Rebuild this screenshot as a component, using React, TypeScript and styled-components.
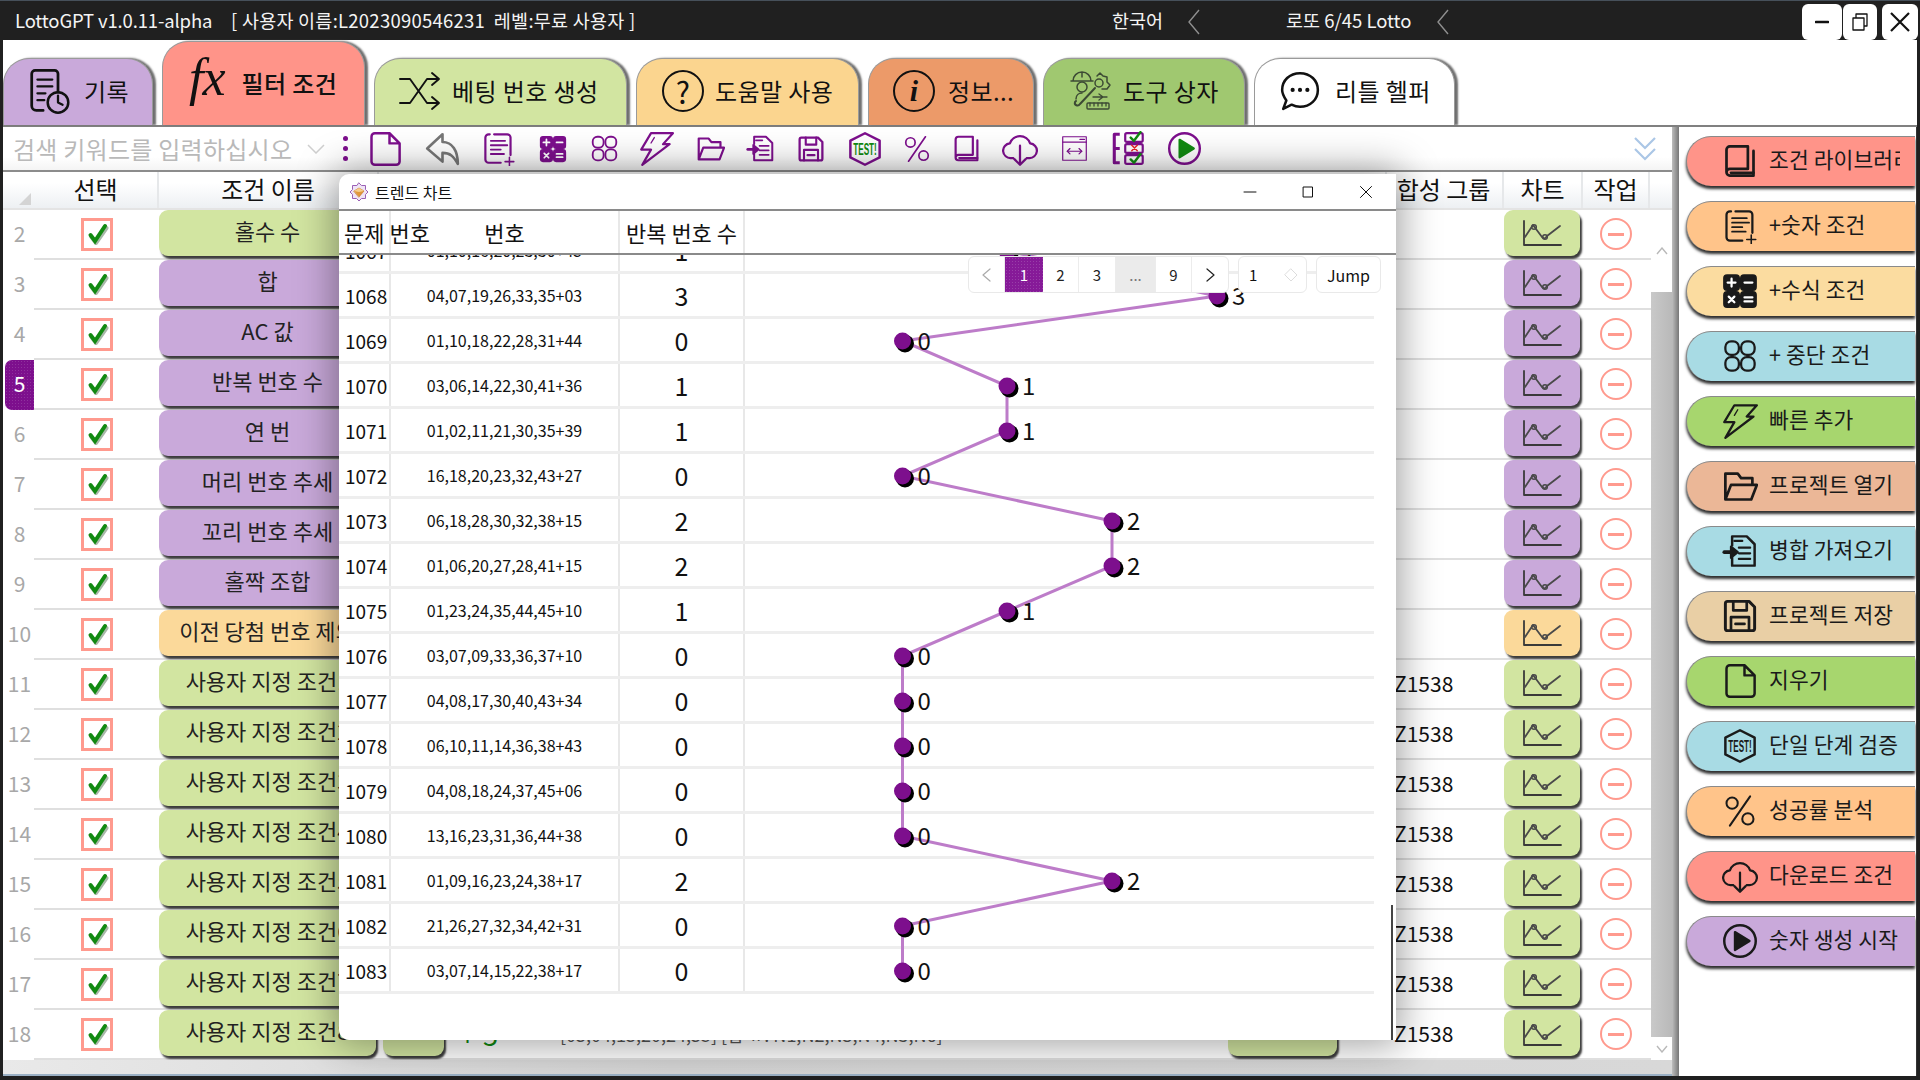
import React from "react";
import styled, { createGlobalStyle } from "styled-components";

const FONT = `"Noto Sans CJK KR", "Noto Sans", sans-serif`;
const C = {
  purple: "#c9a9da",
  green: "#d2e5a1",
  yellow: "#fbd99a",
  red: "#ff9489",
  deep: "#7d0f8d",
};

const Global = createGlobalStyle`
  html, body { margin: 0; padding: 0; background: #202020; overflow: hidden; }
  * { box-sizing: border-box; }
  body { font-family: ${FONT}; color: #111; }
`;

const Window = styled.div`
  position: relative;
  width: 1920px;
  height: 1080px;
  padding: 3px 3px 4px 3px;
  background: #202020;
  border-top: 1px solid #46505a;
  display: flex;
  flex-direction: column;
  overflow: hidden;
`;

const TitleBar = styled.header`
  height: 36px;
  flex: none;
  display: flex;
  align-items: center;
  color: #f4f4f4;
  font-size: 18.5px;
  white-space: nowrap;
`;
const TitleText = styled.span<{ $w: number; $ml?: number; $ls?: number }>`
  width: ${(p) => p.$w}px;
  margin-left: ${(p) => p.$ml ?? 0}px;
  letter-spacing: ${(p) => p.$ls ?? 0}px;
  flex: none;
  margin-bottom: 4px;
`;
const ChevronLeft = styled.svg`
  width: 14px;
  height: 26px;
  flex: none;
  fill: none;
  stroke: #8f8f8f;
  stroke-width: 1.4;
`;
const WinButtons = styled.div`
  margin-left: auto;
  margin-right: -1px;
  display: flex;
  height: 36px;
`;
const WinButton = styled.button<{ $w: number; $mr: number }>`
  width: ${(p) => p.$w}px;
  height: 36px;
  border: 0;
  padding: 0;
  margin-right: ${(p) => p.$mr}px;
  background: #fff;
  border-radius: 6px;
  display: flex;
  align-items: center;
  justify-content: center;
  color: #111;
`;

const Tabs = styled.nav`
  height: 87px;
  flex: none;
  background: #fff;
  border-bottom: 2px solid #808080;
  display: flex;
  align-items: flex-end;
  gap: 9px;
`;
const Tab = styled.div<{ $w: number; $bg: string; $active?: boolean; $pl: number; $gap: number }>`
  width: ${(p) => p.$w}px;
  height: ${(p) => (p.$active ? 84 : 67)}px;
  flex: none;
  background: ${(p) => p.$bg};
  border: 1px solid #9a9a9a;
  border-bottom: 0;
  border-radius: 26px 26px 0 0;
  box-shadow: 3px 0 2px #6e6e6e;
  display: flex;
  align-items: center;
  padding: 0 0 3px ${(p) => p.$pl}px;
  gap: ${(p) => p.$gap}px;
  font-size: 24px;
  letter-spacing: 0.4px;
  white-space: nowrap;
  color: #111;
`;
const FxMark = styled.span`
  font: italic 500 52px "Liberation Serif", serif;
  letter-spacing: -1px;
  line-height: 1;
  margin-top: -8px;
`;
const ActiveLabel = styled.span`
  font-weight: 500;
`;

const Body = styled.div`
  flex: 1;
  min-height: 0;
  display: flex;
  background: #fff;
`;
const Main = styled.main`
  width: 1669px;
  flex: none;
  display: flex;
  flex-direction: column;
`;
const Divider = styled.div`
  width: 7px;
  flex: none;
  background: linear-gradient(90deg, #bdbdbd, #777);
`;

const Toolbar = styled.div`
  height: 45px;
  flex: none;
  display: flex;
  align-items: center;
  border-bottom: 2px solid #8c8c8c;
  background: linear-gradient(#fff 70%, #f4f4f4);
`;
const Search = styled.div`
  width: 330px;
  flex: none;
  height: 40px;
  padding-left: 10px;
  display: flex;
  align-items: center;
  color: #b9b9b9;
  font-size: 24px;
  letter-spacing: 0.25px;
  white-space: nowrap;
`;
const SearchText = styled.span`
  width: 281px;
  overflow: hidden;
  flex: none;
`;
const SearchCaret = styled.svg`
  width: 18px;
  height: 10px;
  margin-left: 13px;
  flex: none;
  fill: none;
  stroke: #cfcfcf;
  stroke-width: 1.5;
`;
const Dots = styled.div`
  width: 24px;
  flex: none;
  display: flex;
  flex-direction: column;
  align-items: center;
  gap: 5px;
  i {
    width: 5px;
    height: 5px;
    border-radius: 50%;
    background: ${C.deep};
  }
`;
const ToolSlot = styled.div<{ $w: number }>`
  width: ${(p) => p.$w}px;
  flex: none;
  display: flex;
  justify-content: center;
  align-items: center;
  color: ${C.deep};
`;
const ToolEnd = styled.svg`
  margin-left: auto;
  margin-right: 15px;
  width: 24px;
  height: 24px;
  fill: none;
  stroke: #aac6e6;
  stroke-width: 2.2;
`;

const HeadRow = styled.div`
  height: 38px;
  flex: none;
  display: flex;
  background: linear-gradient(#fff 30%, #edf0f3);
  font-size: 24px;
  border-bottom: 2px solid #e4e4e4;
`;
const Corner = styled.div`
  width: 31px;
  flex: none;
  position: relative;
  &::after {
    content: "";
    position: absolute;
    right: 3px;
    bottom: 3px;
    border-left: 12px solid transparent;
    border-bottom: 12px solid #d4d4d4;
  }
`;
const HeadCell = styled.div<{ $w: number; $pr?: number }>`
  width: ${(p) => p.$w}px;
  flex: none;
  display: flex;
  align-items: center;
  justify-content: center;
  padding: 0 ${(p) => p.$pr ?? 0}px 3px 0;
  border-right: 2px solid #e6e8ea;
  white-space: nowrap;
`;

const TableArea = styled.div`
  height: 850px;
  flex: none;
  display: flex;
`;
const Rows = styled.div`
  width: 1648px;
  flex: none;
  display: flex;
  flex-direction: column;
`;
const Row = styled.div`
  height: 50px;
  flex: none;
  display: flex;
`;
const RowNum = styled.div<{ $sel?: boolean }>`
  width: 29px;
  margin-left: 2px;
  flex: none;
  display: flex;
  align-items: center;
  justify-content: center;
  font-size: 21px;
  padding-bottom: 5px;
  color: ${(p) => (p.$sel ? "#fff" : "#a8a8a8")};
  border-radius: 7px 0 0 7px;
  background-color: ${(p) => (p.$sel ? C.deep : "transparent")};
  background-image: ${(p) =>
    p.$sel ? "radial-gradient(rgba(255,255,255,.14) 1px, transparent 1px)" : "none"};
  background-size: 3px 3px;
`;
const RowBody = styled.div`
  flex: 1;
  display: flex;
  align-items: flex-start;
  border-bottom: 2px solid #dfdfdf;
  height: 50px;
`;
const CheckCell = styled.div`
  width: 125px;
  height: 48px;
  flex: none;
  display: flex;
  align-items: center;
  justify-content: center;
`;
const CheckBox = styled.div`
  width: 32px;
  height: 33px;
  border: 3px solid #ff9a8e;
  background: #fff;
  display: flex;
  align-items: center;
  justify-content: center;
`;
const RowButton = styled.div<{ $w: number; $bg: string; $mr?: number }>`
  width: ${(p) => p.$w}px;
  height: 46px;
  flex: none;
  margin-right: ${(p) => p.$mr ?? 0}px;
  background: ${(p) => p.$bg};
  border-radius: 9px;
  box-shadow: 2px 3px 2px #3c3c3c;
  display: flex;
  align-items: center;
  justify-content: center;
  font-size: 22px;
  padding-bottom: 6px;
  white-space: nowrap;
  overflow: hidden;
  color: #222;
`;
const ChartHolder = styled.span`
  display: flex;
  margin-top: 6px;
`;
const PlusCell = styled.div`
  width: 116px;
  height: 48px;
  flex: none;
  padding-left: 16px;
  display: flex;
  align-items: center;
  color: #118a11;
  font-size: 27px;
  word-spacing: 2px;
`;
const MidText = styled.div`
  width: 668px;
  height: 48px;
  flex: none;
  display: flex;
  align-items: center;
  font-size: 18px;
  color: #555;
  white-space: nowrap;
`;
const GroupCell = styled.div`
  width: 167px;
  height: 48px;
  flex: none;
  padding: 0 0 3px 57px;
  display: flex;
  align-items: center;
  font-size: 21px;
`;
const RemoveCell = styled.div`
  flex: 1;
  height: 48px;
  display: flex;
  align-items: center;
  justify-content: center;
`;
const RemoveIcon = styled.div`
  width: 32px;
  height: 32px;
  border: 2px solid #ff9a8e;
  border-radius: 50%;
  display: flex;
  align-items: center;
  justify-content: center;
  &::after {
    content: "";
    width: 16px;
    height: 3px;
    background: #ff9a8e;
  }
`;
const VScroll = styled.div`
  width: 21px;
  flex: none;
  display: flex;
  flex-direction: column;
  align-items: center;
  background: #f7f7f7;
`;
const VSpace = styled.div<{ $h: number }>`
  height: ${(p) => p.$h}px;
  width: 100%;
  flex: none;
  background: #fff;
  display: flex;
  align-items: center;
  justify-content: center;
`;
const VThumb = styled.div`
  flex: 1;
  width: 100%;
  background: linear-gradient(90deg, #c9c9c9, #b9b9b9);
`;
const ArrowMark = styled.svg`
  width: 12px;
  height: 8px;
  fill: none;
  stroke: #b9b9b9;
  stroke-width: 1.4;
`;
const HScroll = styled.div`
  height: 16px;
  flex: none;
  background: linear-gradient(90deg, #e9e9e9, #d4d4d4 40%, #d8d8d8);
  border-bottom: 2px solid #9bb0c4;
`;

const Sidebar = styled.aside`
  flex: 1;
  padding: 9px 1px 0 7px;
  display: flex;
  flex-direction: column;
  gap: 15px;
  border-right: 1px solid #333;
`;
const SideButton = styled.div<{ $bg: string }>`
  height: 50px;
  flex: none;
  background: ${(p) => p.$bg};
  border: 1px solid #8a8a8a;
  border-right: 0;
  border-bottom: 0;
  border-radius: 25px 0 0 25px;
  box-shadow: 0 3px 3px #2e2e2e;
  display: flex;
  align-items: center;
  padding: 0 0 2px 35px;
  gap: 11px;
  font-size: 21.5px;
  letter-spacing: 0.1px;
  white-space: nowrap;
  color: #1a1a1a;
`;
const SideLabel = styled.span`
  max-width: 131px;
  overflow: hidden;
  margin-bottom: 4px;
`;

const Modal = styled.section`
  position: absolute;
  left: 339px;
  top: 173px;
  width: 1057px;
  height: 866px;
  background: #fff;
  border-radius: 10px 0 0 10px;
  box-shadow: 0 0 38px 5px rgba(0, 0, 0, 0.37);
  display: flex;
  flex-direction: column;
  overflow: hidden;
`;
const ModalTitle = styled.div`
  height: 37px;
  flex: none;
  display: flex;
  align-items: center;
  padding-left: 10px;
  gap: 6px;
  border-bottom: 2px solid #8a8a8a;
  font-size: 16px;
`;
const ModalControls = styled.div`
  margin-left: auto;
  display: flex;
  align-items: center;
  gap: 44px;
  margin-right: 23px;
`;
const ModalHead = styled.div`
  height: 44px;
  flex: none;
  display: grid;
  grid-template-columns: 52px 229px 125px 1fr;
  border-bottom: 2px solid #8a8a8a;
  font-size: 22px;
`;
const ModalHeadCell = styled.div<{ $left?: boolean }>`
  display: flex;
  align-items: center;
  justify-content: ${(p) => (p.$left ? "flex-start" : "center")};
  padding-left: ${(p) => (p.$left ? 5 : 0)}px;
  border-right: 2px solid #e8e8e8;
  white-space: nowrap;
`;
const ModalBody = styled.div`
  position: relative;
  flex: 1;
  overflow: hidden;
`;
const DataList = styled.div`
  margin-top: -26px;
  width: 1035px;
`;
const DataRow = styled.div`
  height: 45px;
  display: grid;
  grid-template-columns: 52px 229px 125px 1fr;
  border-bottom: 3px solid #eeeeee;
`;
const DataCell = styled.div<{ $size: number; $left?: boolean }>`
  display: flex;
  align-items: center;
  justify-content: ${(p) => (p.$left ? "flex-start" : "center")};
  padding-left: ${(p) => (p.$left ? 6 : 0)}px;
  border-right: 2px solid #e8e8e8;
  font-size: ${(p) => p.$size}px;
  white-space: nowrap;
`;
const ChartSvg = styled.svg`
  position: absolute;
  left: 406px;
  top: 0;
  width: 651px;
  height: 785px;
  font-family: ${FONT};
`;
const InnerThumb = styled.div`
  position: absolute;
  right: 3px;
  bottom: 0;
  width: 2px;
  height: 135px;
  background: #444;
`;
const Pager = styled.div`
  position: absolute;
  left: 629px;
  top: 1px;
  display: flex;
  gap: 9px;
  height: 37px;
  font-size: 15px;
`;
const PagerGroup = styled.div`
  display: flex;
  background: #fff;
  border: 1px solid #e9e9e9;
  border-radius: 6px;
`;
const PageCell = styled.div<{ $w: number; $state?: "active" | "more" }>`
  width: ${(p) => p.$w}px;
  display: flex;
  align-items: center;
  justify-content: center;
  border-right: ${(p) => (p.$state === "active" ? "0" : "1px solid #ececec")};
  color: ${(p) => (p.$state === "active" ? "#fff" : p.$state === "more" ? "#777" : "#222")};
  background-color: ${(p) =>
    p.$state === "active" ? "#861a98" : p.$state === "more" ? "#ebebeb" : "transparent"};
  background-image: ${(p) =>
    p.$state === "active" ? "radial-gradient(rgba(255,255,255,.16) 1px, transparent 1px)" : "none"};
  background-size: 3px 3px;
  &:last-child {
    border-right: 0;
  }
`;
const PagerInput = styled(PagerGroup)`
  width: 69px;
  align-items: center;
  justify-content: space-between;
  padding: 0 8px 0 10px;
`;
const PagerJump = styled(PagerGroup)`
  width: 65px;
  align-items: center;
  justify-content: center;
  font-size: 16px;
`;
const Glyph = styled.svg<{ $s: number; $h?: number; $tone?: string }>`
  width: ${(p) => p.$s}px;
  height: ${(p) => p.$h ?? p.$s}px;
  flex: none;
  fill: none;
  color: ${(p) => p.$tone ?? "inherit"};
  stroke: currentColor;
  stroke-width: 2;
  stroke-linejoin: round;
  stroke-linecap: round;
`;

type IconName =
  | "book" | "numdoc" | "calc" | "grid" | "bolt" | "folder" | "import" | "save"
  | "doc" | "test" | "percent" | "cloud" | "play" | "back" | "window" | "checks";

const Icon: React.FC<{ name: IconName; s: number; accent?: string }> = ({ name, s, accent = "currentColor" }) => {
  const g = (children: React.ReactNode) => (
    <Glyph $s={s} viewBox="0 0 32 32">{children}</Glyph>
  );
  switch (name) {
    case "book":
      return g(<>
        <path d="M4 26V6a3 3 0 0 1 3-3h16v20H7a3 3 0 0 0-3 3 3 3 0 0 0 3 3h21V7" strokeWidth={2.4} />
        <path d="M8 26.500h20" strokeWidth={2.4} />
      </>);
    case "numdoc":
      return g(<>
        <path d="M12 3h12a3 3 0 0 1 3 3v16M18 29H7a3 3 0 0 1-3-3V6a3 3 0 0 1 3-3h1" />
        <path d="M9 9h13M9 13h15M9 17h9M9 21h12" strokeWidth={1.7} />
        <path d="M26 24v8M22 28h8" strokeWidth={1.4} />
      </>);
    case "calc":
      return g(<>
        <rect x="2" y="2" width="13" height="13" rx="2.500" fill="currentColor" />
        <rect x="17" y="2" width="13" height="13" rx="2.500" fill="currentColor" />
        <rect x="2" y="17" width="13" height="13" rx="2.500" fill="currentColor" />
        <rect x="17" y="17" width="13" height="13" rx="2.500" fill="currentColor" />
        <path d="M5 8.500h7M8.500 5v7M20 8.500h7M6 21l5 5M11 21l-5 5M20 21.700h7M20 25.300h7" stroke="#fff" strokeWidth={2} />
      </>);
    case "grid":
      return g(<>
        <rect x="3" y="3" width="12" height="12" rx="5" />
        <rect x="17" y="3" width="12" height="12" rx="5" />
        <rect x="3" y="17" width="12" height="12" rx="5" />
        <rect x="17" y="17" width="12" height="12" rx="5" />
      </>);
    case "bolt":
      return g(<>
        <path d="M11 2h20l-9 10h6L3 31l8-14H2z" />
        <path d="M14 6l-3 5" strokeWidth={1.2} />
      </>);
    case "folder":
      return g(<path d="M3 28V5h11l3 4h10v6M3 28l5-13h23l-5 13z" strokeWidth={2.4} />);
    case "import":
      return g(<>
        <path d="M9 11V3h13l7 7v19H9v-7" strokeWidth={2.2} />
        <path d="M15 13h10M15 18h10M15 23h10M11 7h7" strokeWidth={2} />
        <path d="M2 17h10" strokeWidth={3.2} />
        <path d="M8 12l6 5-6 5z" fill="currentColor" />
      </>);
    case "save":
      return g(<>
        <path d="M5 3h19l5 5v19a2 2 0 0 1-2 2H5a2 2 0 0 1-2-2V5a2 2 0 0 1 2-2z" strokeWidth={2.6} />
        <path d="M10 3v8h12V3M8 29V17h16v12M12 23h8" strokeWidth={2.4} />
      </>);
    case "doc":
      return g(<path d="M7 2h13l9 9v16a3 3 0 0 1-3 3H7a3 3 0 0 1-3-3V5a3 3 0 0 1 3-3zM20 2v9h9" strokeWidth={2.2} />);
    case "test":
      return g(<>
        <path d="M16 2l13 6.500v15L16 30 3 23.500v-15z" strokeWidth={2.2} />
        <text x="16" y="21" textAnchor="middle" fontSize="14" fontWeight="700" stroke="none" fill={accent} fontFamily={`"Liberation Sans", sans-serif`} textLength="21" lengthAdjust="spacingAndGlyphs">TEST!</text>
      </>);
    case "percent":
      return g(<>
        <circle cx="9" cy="9" r="5" strokeWidth={1.8} />
        <circle cx="23" cy="23" r="5" strokeWidth={1.8} />
        <path d="M25 3L7 29" strokeWidth={1.8} />
      </>);
    case "cloud":
      return g(<>
        <path d="M10 24H8a6.500 6.500 0 0 1-1-13 9.500 9.500 0 0 1 18 0 6.500 6.500 0 0 1-1 13h-2" />
        <path d="M16 13v17M11 25l5 5 5-5" />
      </>);
    case "play":
      return g(<>
        <circle cx="16" cy="16" r="14" strokeWidth={2.2} />
        <path d="M11.500 8l13 8-13 8z" fill={accent} stroke={accent} />
      </>);
    case "back":
      return g(<path d="M16 3L2 16l14 12v-8c7 0 10 3 14 10 0-12-5-20-14-20z" stroke="#777" strokeWidth={2.4} />);
    case "window":
      return g(<>
        <rect x="3" y="3" width="26" height="26" strokeWidth={1.3} />
        <path d="M3 9h26M22 6h5M8 19h16" strokeWidth={1.3} />
        <path d="M11 16l-3 3 3 3M21 16l3 3-3 3" strokeWidth={1.3} />
      </>);
    case "checks":
      return g(<>
        <path d="M8 3H3v26h5M3 16h5" strokeWidth={2.8} strokeLinecap="butt" />
        <rect x="13" y="2" width="16" height="8" rx="1.500" />
        <rect x="13" y="12" width="16" height="8" rx="1.500" />
        <rect x="13" y="22" width="16" height="8" rx="1.500" />
        <path d="M18 6l3 3 6-8M18 26l3 3 6-8" stroke="#118a11" strokeWidth={2.2} />
        <path d="M19 13l5 5M24 13l-5 5" stroke="#e8262a" strokeWidth={1.4} />
      </>);
  }
};

const CheckMark = () => (
  <Glyph $s={24} viewBox="0 0 24 24">
    <path d="M5.500 14l4.500 6L20.500 5" stroke="#a8b8a8" strokeWidth={4} transform="translate(1 1)" />
    <path d="M5.500 13l4.500 6L20 4" stroke="#118a11" strokeWidth={4} strokeLinejoin="miter" />
  </Glyph>
);

const ChartIcon = () => (
  <Glyph $s={40} $h={28} viewBox="0 0 40 28">
    <path d="M2 2v24h37" stroke="#3a3a3a" strokeWidth={1.8} />
    <path d="M3 18L11 6l9 12c2 2 3 2 5-1L38 7" stroke="#4a4a4a" strokeWidth={1.8} />
    <circle cx="12" cy="8" r="2.300" stroke="#4a4a4a" strokeWidth={1.5} />
    <circle cx="23" cy="18" r="2.300" stroke="#4a4a4a" strokeWidth={1.5} />
  </Glyph>
);

const TitleChevron = () => (
  <ChevronLeft viewBox="0 0 14 26"><path d="M12 1L2 13l10 12" /></ChevronLeft>
);

const BoardIcon = () => (
  <Glyph $s={48} viewBox="0 0 42 42">
    <path d="M9 3h16a3 3 0 0 1 3 3v16M15 38H9a4 4 0 0 1-4-4V6a3 3 0 0 1 3-3" strokeWidth={2.4} />
    <path d="M10 11h13M10 17h13M10 23h7M10 29h6" strokeWidth={2} />
    <circle cx="28" cy="31" r="9" strokeWidth={2.2} />
    <path d="M28 25v6l4 2" strokeWidth={2} />
  </Glyph>
);
const ShuffleIcon = () => (
  <Glyph $s={42} viewBox="0 0 42 42">
    <path d="M1 9h10l17 24h11M1 33h10l17-24h11" strokeWidth={1.9} />
    <path d="M33 3l7 6-7 6M33 27l7 6-7 6" strokeWidth={1.9} />
  </Glyph>
);
const CircleGlyph = styled.div<{ $serif?: boolean }>`
  width: 42px;
  height: 42px;
  flex: none;
  border: 2.4px solid #111;
  border-radius: 50%;
  display: flex;
  align-items: center;
  justify-content: center;
  font: ${(p) => (p.$serif ? `italic 700 30px "Liberation Serif", serif` : `400 30px ${FONT}`)};
`;
const ToolsIcon = () => (
  <Glyph $s={42} $tone="#3c4a34" viewBox="0 0 42 42">
    <path d="M4 11a9 9 0 0 1 18 0zM2 11h22M13 2v5" strokeWidth={1.5} />
    <circle cx="13" cy="17" r="5" strokeWidth={1.5} />
    <path d="M7 29c0-4 3-6 6-6" strokeWidth={1.5} />
    <path d="M28 6l3-3 3 3 4 1v5l3 3-3 4h-5" strokeWidth={1.5} />
    <circle cx="30" cy="13" r="4" strokeWidth={1.5} />
    <path d="M26 18L11 34c-2 3-6 1-5-2l1-1" strokeWidth={2} />
    <rect x="18" y="33" width="22" height="6" rx="1" strokeWidth={1.4} />
    <path d="M21 33v3M25 33v3M29 33v3M33 33v3M37 33v3M24 27h14M30 24l4 3-4 3" strokeWidth={1.3} />
  </Glyph>
);
const ChatIcon = () => (
  <Glyph $s={42} viewBox="0 0 40 40">
    <path d="M20 3c10 0 17 7 17 16s-7 16-17 16c-3 0-6-1-8-2l-8 4 3-8c-2-3-4-6-4-10C3 10 10 3 20 3z" strokeWidth={2.4} />
    <circle cx="13" cy="19" r="1" fill="currentColor" />
    <circle cx="20" cy="19" r="1" fill="currentColor" />
    <circle cx="27" cy="19" r="1" fill="currentColor" />
  </Glyph>
);
const GemIcon = () => (
  <Glyph $s={20} viewBox="0 0 20 20">
    <path d="M10 1l2.500 2.500H16.500V7.500L19 10l-2.500 2.500v4H12.500L10 19l-2.500-2.500h-4v-4L1 10l2.500-2.500v-4h4z" fill="#efe4f5" stroke="#9a5fb5" strokeWidth={1} />
    <path d="M5 9l5-3 5 3-5 6z" fill="#e0973a" stroke="#c06f1e" strokeWidth={0.6} />
    <path d="M5 9l5 1 5-1-5-3z" fill="#f6cd8a" stroke="none" />
  </Glyph>
);

const tools: { n: IconName; w: number; s: number; accent?: string }[] = [
  { n: "doc", w: 56, s: 36 },
  { n: "back", w: 58, s: 35 },
  { n: "numdoc", w: 54, s: 35 },
  { n: "calc", w: 56, s: 28 },
  { n: "grid", w: 46, s: 29 },
  { n: "bolt", w: 58, s: 35 },
  { n: "folder", w: 50, s: 29 },
  { n: "import", w: 50, s: 29 },
  { n: "save", w: 52, s: 28 },
  { n: "test", w: 56, s: 36, accent: "#118a11" },
  { n: "percent", w: 48, s: 30 },
  { n: "book", w: 50, s: 29 },
  { n: "cloud", w: 58, s: 36 },
  { n: "window", w: 50, s: 29 },
  { n: "checks", w: 58, s: 35 },
  { n: "play", w: 54, s: 35, accent: "#118a11" },
];

const side: { n: IconName; t: string; bg: string }[] = [
  { n: "book", t: "조건 라이브러리", bg: "#ff9489" },
  { n: "numdoc", t: "+숫자 조건", bg: "#ffc48a" },
  { n: "calc", t: "+수식 조건", bg: "#fbdca0" },
  { n: "grid", t: "+ 중단 조건", bg: "#a8dbe4" },
  { n: "bolt", t: "빠른 추가", bg: "#a7d66e" },
  { n: "folder", t: "프로젝트 열기", bg: "#ebb797" },
  { n: "import", t: "병합 가져오기", bg: "#a8dbe4" },
  { n: "save", t: "프로젝트 저장", bg: "#e9cfa5" },
  { n: "doc", t: "지우기", bg: "#a7d66e" },
  { n: "test", t: "단일 단계 검증", bg: "#a8dbe4" },
  { n: "percent", t: "성공률 분석", bg: "#ffc48a" },
  { n: "cloud", t: "다운로드 조건", bg: "#ff9489" },
  { n: "play", t: "숫자 생성 시작", bg: "#c9a9da" },
];

const names: [string, string][] = [
  ["홀수 수", C.green],
  ["합", C.purple],
  ["AC 값", C.purple],
  ["반복 번호 수", C.purple],
  ["연 번", C.purple],
  ["머리 번호 추세", C.purple],
  ["꼬리 번호 추세", C.purple],
  ["홀짝 조합", C.purple],
  ["이전 당첨 번호 제외", C.yellow],
  ...Array.from({ length: 8 }, (_, i): [string, string] => [`사용자 지정 조건${i + 1}`, C.green]),
];

const draws: [number, string, number][] = [
  [1067, "01,10,16,20,23,30+45", 1],
  [1068, "04,07,19,26,33,35+03", 3],
  [1069, "01,10,18,22,28,31+44", 0],
  [1070, "03,06,14,22,30,41+36", 1],
  [1071, "01,02,11,21,30,35+39", 1],
  [1072, "16,18,20,23,32,43+27", 0],
  [1073, "06,18,28,30,32,38+15", 2],
  [1074, "01,06,20,27,28,41+15", 2],
  [1075, "01,23,24,35,44,45+10", 1],
  [1076, "03,07,09,33,36,37+10", 0],
  [1077, "04,08,17,30,40,43+34", 0],
  [1078, "06,10,11,14,36,38+43", 0],
  [1079, "04,08,18,24,37,45+06", 0],
  [1080, "13,16,23,31,36,44+38", 0],
  [1081, "01,09,16,23,24,38+17", 2],
  [1082, "21,26,27,32,34,42+31", 0],
  [1083, "03,07,14,15,22,38+17", 0],
];
const px = (v: number) => [157.5, 262, 367, 472][v];
const py = (i: number) => -4 + 45 * i;
const linePoints = draws.map((d, i) => `${px(d[2])},${py(i)}`).join(" ");

export default function App() {
  return (
    <Window>
      <Global />
      <TitleBar>
        <TitleText $w={216} $ml={12} $ls={-0.15}>LottoGPT v1.0.11-alpha</TitleText>
        <TitleText $w={878} $ls={0.25}>[ 사용자 이름:L2023090546231&nbsp; 레벨:무료 사용자 ]</TitleText>
        <TitleText $w={75} $ml={3}>한국어</TitleText>
        <TitleChevron />
        <TitleText $w={150} $ml={85}>로또 6/45 Lotto</TitleText>
        <TitleChevron />
        <WinButtons>
          <WinButton $w={40} $mr={1}>
            <Glyph $s={14} viewBox="0 0 14 14"><path d="M1 7h12" strokeWidth={2.6} /></Glyph>
          </WinButton>
          <WinButton $w={34} $mr={5}>
            <Glyph $s={20} viewBox="0 0 20 20"><path d="M3 6h11v12H3zM6 6V2h11v12h-3" strokeWidth={1.3} /></Glyph>
          </WinButton>
          <WinButton $w={36} $mr={0}>
            <Glyph $s={22} viewBox="0 0 22 22"><path d="M2 2l18 18M20 2L2 20" strokeWidth={2.2} strokeLinecap="butt" /></Glyph>
          </WinButton>
        </WinButtons>
      </TitleBar>

      <Tabs>
        <Tab $w={150} $bg={C.purple} $pl={22} $gap={10}><BoardIcon />기록</Tab>
        <Tab $w={203} $bg={C.red} $active $pl={26} $gap={17}><FxMark>fx</FxMark><ActiveLabel>필터 조건</ActiveLabel></Tab>
        <Tab $w={253} $bg={C.green} $pl={24} $gap={11}><ShuffleIcon />베팅 번호 생성</Tab>
        <Tab $w={223} $bg="#fbd58f" $pl={25} $gap={11}><CircleGlyph>?</CircleGlyph>도움말 사용</Tab>
        <Tab $w={166} $bg="#ec9a69" $pl={24} $gap={13}><CircleGlyph $serif>i</CircleGlyph>정보...</Tab>
        <Tab $w={202} $bg="#a0c870" $pl={25} $gap={12}><ToolsIcon />도구 상자</Tab>
        <Tab $w={201} $bg="#fff" $pl={24} $gap={14}><ChatIcon />리틀 헬퍼</Tab>
      </Tabs>

      <Body>
        <Main>
          <Toolbar>
            <Search>
              <SearchText>검색 키워드를 입력하십시오</SearchText>
              <SearchCaret viewBox="0 0 18 10"><path d="M1 1l8 8 8-8" /></SearchCaret>
            </Search>
            <Dots><i /><i /><i /></Dots>
            {tools.map((t, i) => (
              <ToolSlot key={i} $w={t.w}>
                <Icon name={t.n} s={t.s} accent={t.accent} />
              </ToolSlot>
            ))}
            <ToolEnd viewBox="0 0 24 24"><path d="M2 1l10 10L22 1M2 12l10 10 10-10" /></ToolEnd>
          </Toolbar>

          <HeadRow>
            <Corner />
            <HeadCell $w={125}>선택</HeadCell>
            <HeadCell $w={220}>조건 이름</HeadCell>
            <HeadCell $w={1008} />
            <HeadCell $w={117} $pr={2}>합성 그룹</HeadCell>
            <HeadCell $w={79}>차트</HeadCell>
            <HeadCell $w={67}>작업</HeadCell>
          </HeadRow>

          <TableArea>
            <Rows>
              {names.map(([name, bg], i) => (
                <Row key={i}>
                  <RowNum $sel={i === 3}>{i + 2}</RowNum>
                  <RowBody>
                    <CheckCell><CheckBox><CheckMark /></CheckBox></CheckCell>
                    <RowButton $w={217} $bg={bg} $mr={7}>{name}</RowButton>
                    <RowButton $w={61} $bg={bg} />
                    <PlusCell>+ 5</PlusCell>
                    <MidText>[03,04,13,20,24,35] [합 ㅠ: N1,N2,N3,N4,N5,N6]</MidText>
                    <RowButton $w={109} $bg={bg} />
                    <GroupCell>{i >= 9 ? "Z1538" : ""}</GroupCell>
                    <RowButton $w={76} $bg={bg}><ChartHolder><ChartIcon /></ChartHolder></RowButton>
                    <RemoveCell><RemoveIcon /></RemoveCell>
                  </RowBody>
                </Row>
              ))}
            </Rows>
            <VScroll>
              <VSpace $h={82}>
                <ArrowMark viewBox="0 0 12 8"><path d="M1 7l5-6 5 6" /></ArrowMark>
              </VSpace>
              <VThumb />
              <VSpace $h={23}>
                <ArrowMark viewBox="0 0 12 8"><path d="M1 1l5 6 5-6" /></ArrowMark>
              </VSpace>
            </VScroll>
          </TableArea>
          <HScroll />
        </Main>
        <Divider />
        <Sidebar>
          {side.map((b) => (
            <SideButton key={b.t} $bg={b.bg}>
              <Icon name={b.n} s={36} />
              <SideLabel>{b.t}</SideLabel>
            </SideButton>
          ))}
        </Sidebar>
      </Body>

      <Modal>
        <ModalTitle>
          <GemIcon />
          트렌드 차트
          <ModalControls>
            <Glyph $s={14} viewBox="0 0 14 14"><path d="M1 7h12" strokeWidth={1} /></Glyph>
            <Glyph $s={14} viewBox="0 0 14 14"><rect x="2.500" y="2" width="9" height="10" strokeWidth={1} /></Glyph>
            <Glyph $s={14} viewBox="0 0 14 14"><path d="M1.500 1.500l11 11M12.500 1.500l-11 11" strokeWidth={1} /></Glyph>
          </ModalControls>
        </ModalTitle>
        <ModalHead>
          <ModalHeadCell $left>문제 번호</ModalHeadCell>
          <ModalHeadCell>번호</ModalHeadCell>
          <ModalHeadCell>반복 번호 수</ModalHeadCell>
          <div />
        </ModalHead>
        <ModalBody>
          <DataList>
            {draws.map(([no, nums, rep]) => (
              <DataRow key={no}>
                <DataCell $size={19} $left>{no}</DataCell>
                <DataCell $size={16}>{nums}</DataCell>
                <DataCell $size={25}>{rep}</DataCell>
                <div />
              </DataRow>
            ))}
          </DataList>
          <ChartSvg viewBox="0 0 651 785">
            <polyline points={linePoints} fill="none" stroke="#bd7cc9" strokeWidth={3} />
            {draws.map(([no, , v], i) => (
              <g key={no}>
                <circle cx={px(v) + 2.5} cy={py(i) + 2.5} r={9} fill="#000" />
                <circle cx={px(v)} cy={py(i)} r={8.5} fill={C.deep} />
                <text x={px(v) + 15} y={py(i) + 9} fontSize={24} fill="#111">{v}</text>
              </g>
            ))}
          </ChartSvg>
          <Pager>
            <PagerGroup>
              <PageCell $w={36}><Glyph $s={16} $tone="#aaa" viewBox="0 0 16 16"><path d="M11 2L4 8l7 6" strokeWidth={1.2} /></Glyph></PageCell>
              <PageCell $w={38} $state="active">1</PageCell>
              <PageCell $w={36}>2</PageCell>
              <PageCell $w={37}>3</PageCell>
              <PageCell $w={40} $state="more">...</PageCell>
              <PageCell $w={36}>9</PageCell>
              <PageCell $w={36}><Glyph $s={16} viewBox="0 0 16 16"><path d="M5 2l7 6-7 6" strokeWidth={1.2} /></Glyph></PageCell>
            </PagerGroup>
            <PagerInput>
              1
              <Glyph $s={14} $tone="#ddd" viewBox="0 0 14 14"><path d="M7 1l6 6-6 6-6-6z" strokeWidth={1} /></Glyph>
            </PagerInput>
            <PagerJump>Jump</PagerJump>
          </Pager>
          <InnerThumb />
        </ModalBody>
      </Modal>
    </Window>
  );
}
